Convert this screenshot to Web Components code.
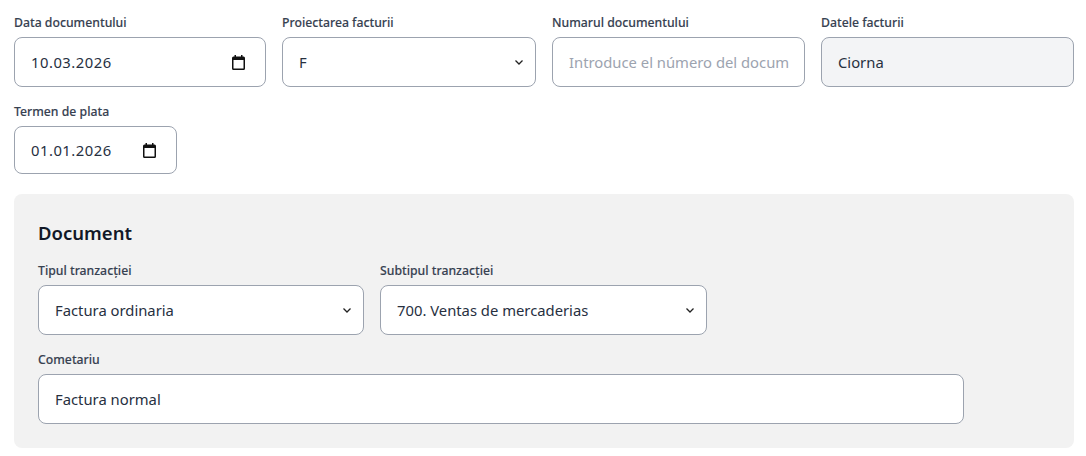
<!DOCTYPE html>
<html lang="ro"><head><meta charset="utf-8"><title>Document</title>
<style>
html,body{margin:0;background:#fff}
body{font-family:"Noto Sans","Open Sans",sans-serif;padding:14px 12px 8px 14px;width:1060px}
</style></head><body>
<invoice-form></invoice-form>
<template id="t-field"><style>
:host{display:block;min-width:0}
.lab{display:block;font-size:12.25px;line-height:17px;font-weight:500;color:#374151;margin-bottom:6px;white-space:nowrap;-webkit-text-stroke:.12px #374151}
.box{box-sizing:border-box;height:var(--h,50px);display:flex;align-items:center;padding:0 var(--pr,15px) 0 16px;border:1px solid #9ca3af;border-radius:8px;background:var(--bg,#fff);font-size:14.8px;color:#27303f;overflow:hidden}
.val{flex:1;min-width:0;white-space:nowrap;overflow:hidden}
slot[name=icon]{display:flex}
::slotted(svg){flex:none;display:block}
</style><label class="lab"></label><div class="box"><span class="val"><slot></slot></span><slot name="icon"></slot></div></template>
<template id="t-panel"><style>
:host{display:block;background:#f2f2f2;border-radius:8px;padding:24px}
h2{margin:0 0 14px;font-size:18.5px;line-height:30px;font-weight:600;color:#111827}
</style><h2></h2><slot></slot></template>
<template id="t-form"><style>
:host{display:block}
.g4{display:grid;grid-template-columns:252px 254px 253px 253px;gap:16px}
.term{width:163px;margin-top:16px}
.term f-field{--h:48px}
doc-panel{margin-top:20px}
.g3{display:grid;grid-template-columns:326px 327px 327px;gap:16px}
.cm{width:926px;margin-top:16px}
.date{letter-spacing:.5px}
.date-f{--pr:19.7px}
.sel{--pr:12px}
.ph{color:#9ca3af}
svg.cal{width:13px;height:15px}
svg.chev{width:8px;height:5px}
</style>
<div class="g4">
<f-field class="date-f" label="Data documentului"><span class="date">10.03.2026</span><svg slot="icon" class="cal" viewBox="0 0 13 15"><path fill="#111" fill-rule="evenodd" d="M2.5 0H4v1.5h5V0h1.5v1.5h1A1.5 1.5 0 0 1 13 3v10.500a1.500 1.500 0 0 1-1.500 1.500h-10A1.500 1.500 0 0 1 0 13.500V3a1.500 1.500 0 0 1 1.500-1.500h1zM1.500 5v8.500h10V5z"/></svg></f-field>
<f-field class="sel" label="Proiectarea facturii">F<svg slot="icon" class="chev" viewBox="0 0 8 5"><path fill="none" stroke="#222" stroke-width="1.3" d="M.5 .5L4 4 7.500 .5"/></svg></f-field>
<f-field label="Numarul documentului"><span class="ph">Introduce el número del documento</span></f-field>
<f-field label="Datele facturii" style="--bg:#f3f4f6">Ciorna</f-field>
</div>
<div class="term"><f-field class="date-f" label="Termen de plata"><span class="date">01.01.2026</span><svg slot="icon" class="cal" viewBox="0 0 13 15"><path fill="#111" fill-rule="evenodd" d="M2.5 0H4v1.5h5V0h1.5v1.5h1A1.5 1.5 0 0 1 13 3v10.500a1.500 1.500 0 0 1-1.500 1.500h-10A1.500 1.500 0 0 1 0 13.500V3a1.500 1.500 0 0 1 1.500-1.500h1zM1.500 5v8.500h10V5z"/></svg></f-field></div>
<doc-panel title-text="Document">
<div class="g3">
<f-field class="sel" label="Tipul tranzacției">Factura ordinaria<svg slot="icon" class="chev" viewBox="0 0 8 5"><path fill="none" stroke="#222" stroke-width="1.3" d="M.5 .5L4 4 7.500 .5"/></svg></f-field>
<f-field class="sel" label="Subtipul tranzacției">700. Ventas de mercaderias<svg slot="icon" class="chev" viewBox="0 0 8 5"><path fill="none" stroke="#222" stroke-width="1.3" d="M.5 .5L4 4 7.500 .5"/></svg></f-field>
</div>
<div class="cm"><f-field label="Cometariu">Factura normal</f-field></div>
</doc-panel></template>
<script>
class Base extends HTMLElement{mount(id){const r=this.attachShadow({mode:"open"});r.appendChild(document.getElementById(id).content.cloneNode(true));return r}}
class FField extends Base{connectedCallback(){if(this.shadowRoot)return;const r=this.mount("t-field");r.querySelector(".lab").textContent=this.getAttribute("label")}}
class DocPanel extends Base{connectedCallback(){if(this.shadowRoot)return;const r=this.mount("t-panel");r.querySelector("h2").textContent=this.getAttribute("title-text")}}
class InvoiceForm extends Base{connectedCallback(){if(this.shadowRoot)return;this.mount("t-form")}}
customElements.define("f-field",FField);customElements.define("doc-panel",DocPanel);customElements.define("invoice-form",InvoiceForm);
</script></body></html>
